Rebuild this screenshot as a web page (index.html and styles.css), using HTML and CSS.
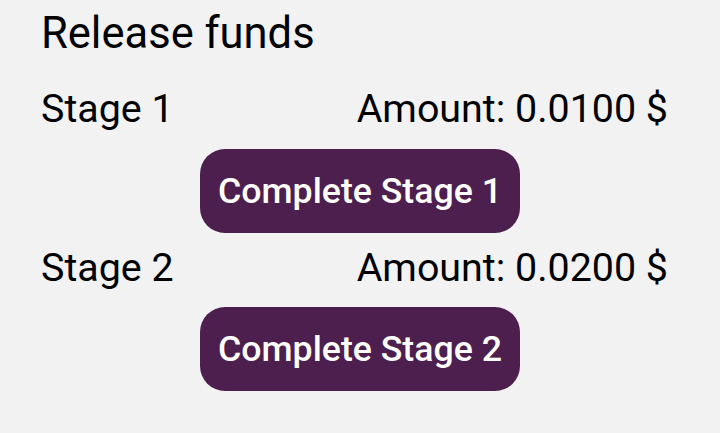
FILE: index.html
```html
<!DOCTYPE html>
<html>
<head>
<meta charset="utf-8">
<link rel="stylesheet" href="styles.css">
</head>
<body>
<div class="panel">
  <h1 class="title">Release funds</h1>
  <div class="stage">
    <div class="row"><span>Stage 1</span><span>Amount: 0.0100 $</span></div>
    <button class="btn">Complete Stage 1</button>
  </div>
  <div class="stage">
    <div class="row"><span>Stage 2</span><span>Amount: 0.0200 $</span></div>
    <button class="btn">Complete Stage 2</button>
  </div>
</div>
</body>
</html>
```
FILE: styles.css
```css
html, body {
  margin: 0;
  background: #f2f2f2;
  font-family: Roboto, "Noto Sans", sans-serif;
  color: #000;
}
.panel {
  width: 720px;
  height: 433px;
  box-sizing: border-box;
  padding: 10px 52px 0 41px;
  display: flex;
  flex-direction: column;
}
.title {
  margin: 0;
  font-size: 43.5px;
  font-weight: 400;
  line-height: 48px;
}
.stage {
  display: flex;
  flex-direction: column;
  align-items: center;
}
.row {
  align-self: stretch;
  display: flex;
  justify-content: space-between;
  font-size: 39.4px;
  line-height: 44px;
  margin-top: 29px;
}
.stage + .stage .row {
  margin-top: 13px;
}
.btn {
  margin-top: 18px;
  margin-left: 11px;
  width: 320px;
  height: 84px;
  border: none;
  border-radius: 25px;
  background: #4d1f4e;
  color: #fff;
  font-family: Roboto, sans-serif;
  font-weight: 500;
  font-size: 35.7px;
  padding: 0;
}
.stage + .stage .btn {
  margin-top: 17px;
}
```
